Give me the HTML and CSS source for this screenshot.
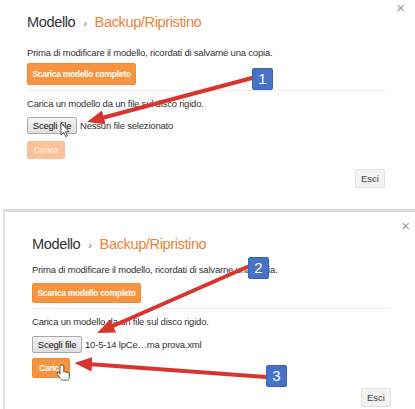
FILE: index.html
```html
<!DOCTYPE html>
<html lang="it">
<head>
<meta charset="utf-8">
<title>Backup/Ripristino</title>
<link rel="stylesheet" href="styles.css">
</head>
<body>
<div class="page">
  <section class="dlg dlg-top">
    <span class="close">×</span>
    <h1 class="title"><span class="crumb">Modello</span><span class="sep">›</span><span class="cur">Backup/Ripristino</span></h1>
    <p class="note">Prima di modificare il modello, ricordati di salvarne una copia.</p>
    <button class="btn-orange">Scarica modello completo</button>
    <div class="rule"></div>
    <p class="note note2">Carica un modello da un file sul disco rigido.</p>
    <div class="file"><span class="btn-file">Scegli file</span><span class="fname">Nessun file selezionato</span></div>
    <button class="btn-orange btn-small disabled">Carica</button>
    <div class="foot"><button class="btn-gray">Esci</button></div>
  </section>
  <section class="dlg dlg-bottom">
    <span class="close">×</span>
    <h1 class="title"><span class="crumb">Modello</span><span class="sep">›</span><span class="cur">Backup/Ripristino</span></h1>
    <p class="note">Prima di modificare il modello, ricordati di salvarne una copia.</p>
    <button class="btn-orange">Scarica modello completo</button>
    <div class="rule"></div>
    <p class="note note2">Carica un modello da un file sul disco rigido.</p>
    <div class="file"><span class="btn-file">Scegli file</span><span class="fname">10-5-14 lpCe…ma prova.xml</span></div>
    <button class="btn-orange btn-small">Carica</button>
    <div class="foot"><button class="btn-gray">Esci</button></div>
  </section>

  <svg class="arrows" width="415" height="409" viewBox="0 0 415 409" aria-hidden="true">
    <defs>
      <marker id="ah" markerWidth="4.4" markerHeight="3.6" refX="1" refY="1.8" orient="auto" markerUnits="strokeWidth">
        <path d="M0,0 L4.4,1.8 L0,3.6 z" fill="#d8352e"/>
      </marker>
    </defs>
    <g stroke="#d8352e" stroke-width="4" stroke-linecap="round" fill="none" marker-end="url(#ah)">
      <path d="M252,78 L100,118.5"/>
      <path d="M247,267 L109.5,327.5"/>
      <path d="M266,377 L88,364"/>
    </g>
    <!-- arrow cursor -->
    <path d="M61,123 L61,135 L63.8,132.4 L65.8,136.6 L67.4,135.8 L65.4,131.8 L69,131.6 Z" fill="#fff" stroke="#333" stroke-width="0.8"/>
    <!-- hand cursor -->
    <path d="M60,366 L60,374 L58.6,372.6 C57.6,371.8 56.4,372.8 57.2,373.8 L60.4,378.6 C61.2,379.8 62.2,380.2 63.6,380.2 L66.6,380.2 C68.2,380.2 69.2,379 69.2,377.4 L69.2,373.2 C69.2,372.2 67.8,372 67.4,372.8 C67.4,371.8 66,371.6 65.6,372.4 C65.6,371.4 64.2,371.2 63.8,372 L63.8,366 C63.8,364.6 60,364.6 60,366 Z" fill="#fff" stroke="#333" stroke-width="0.8"/>
  </svg>
  <span class="badge b1">1</span>
  <span class="badge b2">2</span>
  <span class="badge b3">3</span>
</div>
</body>
</html>
```

FILE: styles.css
```css
* { box-sizing: border-box; }
html, body { margin: 0; padding: 0; background: #fff; }
body {
  font-family: "Liberation Sans", Arial, sans-serif;
  color: #333;
  width: 415px;
  height: 409px;
  overflow: hidden;
}
.page { position: relative; width: 415px; height: 409px; }

.dlg { position: relative; display: flex; flex-direction: column; align-items: flex-start; }
.dlg > * { flex-shrink: 0; }
.dlg-top { height: 209px; padding: 12px 30px 0 27px; }
.dlg-bottom {
  height: 200px;
  border-top: 3px solid #dcdcdc;
  border-left: 2px solid #e4e4e4;
  margin-left: 3px;
  padding: 22px 24px 0 27px;
}

.close { position: absolute; top: 0; right: 10px; font-size: 15px; color: #9a9a9a; line-height: 16px; }
.dlg-bottom .close { top: 6px; right: 5px; }

.title { margin: 0; font-weight: normal; font-size: 14.6px; letter-spacing: -0.4px; line-height: 20px; display: flex; align-items: baseline; }
.crumb { color: #333; }
.sep { color: #777; margin: 0 8px; font-size: 11px; }
.cur { color: #e8833a; }

.note { margin: 13px 0 0; font-size: 9.5px; letter-spacing: -0.2px; line-height: 13px; color: #333; }
.dlg-bottom .note { margin-top: 8px; }
.note2 { margin-top: 6px; }
.dlg-bottom .note2 { margin-top: 6px; }

.btn-orange {
  font-family: inherit;
  border: 1px solid #f08a35;
  background: #f7943f;
  color: #fff;
  font-weight: bold;
  font-size: 8.5px;
  letter-spacing: -0.3px;
  height: 22px;
  width: 109px;
  padding: 0;
  margin-top: 4px;
  border-radius: 2px;
}
.dlg-bottom .btn-orange { margin-top: 7px; height: 20px; }
.btn-orange.btn-small { width: 38px; height: 18px; margin-top: 7px; }
.dlg-bottom .btn-orange.btn-small { height: 20px; margin-top: 5px; }
.disabled { background: #fcc39b; border-color: #fbbd93; color: #fde8da; }

.rule { align-self: stretch; height: 1px; background: #ececec; margin-top: 5px; }

.file { display: flex; align-items: center; margin-top: 7px; font-size: 9.5px; letter-spacing: -0.2px; }
.dlg-bottom .file { margin-top: 8px; }
.btn-file {
  display: inline-block;
  width: 50px;
  text-align: center;
  border: 1px solid #a9a9a9;
  border-radius: 2px;
  background: linear-gradient(#f6f6f6, #dedede);
  color: #111;
  padding: 1px 0;
  line-height: 13px;
}
.fname { margin-left: 3px; color: #333; }

.foot { align-self: stretch; display: flex; justify-content: flex-end; margin-top: 10px; }
.btn-gray {
  font-family: inherit;
  font-size: 9.5px;
  color: #444;
  background: #f3f3f3;
  border: 1px solid #e2e2e2;
  border-radius: 2px;
  height: 19px;
  width: 30px;
  padding: 0;
}

.arrows { position: absolute; left: 0; top: 0; pointer-events: none; }

.badge {
  position: absolute;
  width: 21px; height: 22px;
  background: #4673c8;
  border: 1px solid #3a62ad;
  border-radius: 2px;
  color: #fff;
  font-size: 15px;
  line-height: 20px;
  text-align: center;
}
.b1 { left: 252px; top: 68px; }
.b2 { left: 248px; top: 257px; }
.b3 { left: 266px; top: 365px; }
```
